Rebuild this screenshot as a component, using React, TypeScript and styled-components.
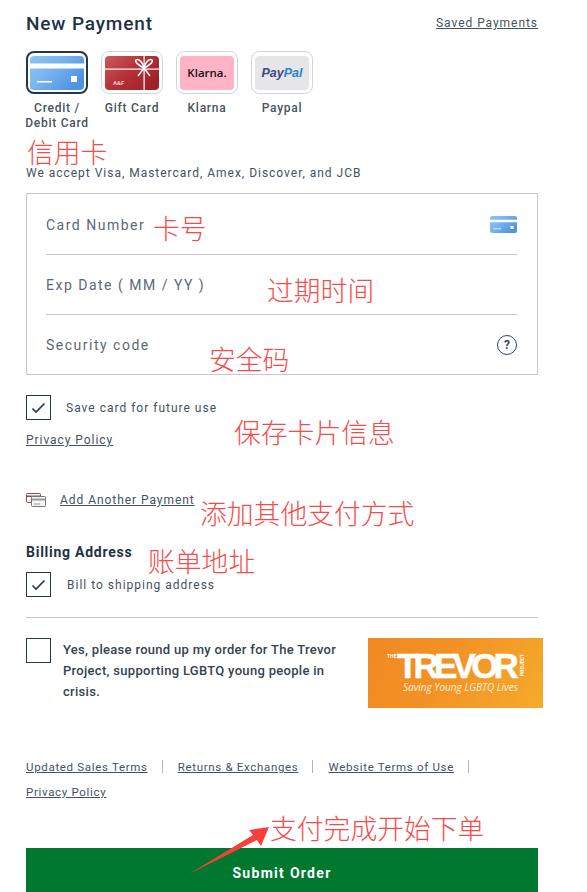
import React from "react";
import styled, { createGlobalStyle } from "styled-components";

const GlobalStyle = createGlobalStyle`
  html, body {
    margin: 0;
    padding: 0;
    background: #fff;
    overflow: hidden;
  }
  body {
    font-family: Roboto, "Liberation Sans", sans-serif;
    color: #2a3a4a;
  }
`;

const tiles = [
  { key: "card", label: "Credit / Debit Card", selected: true },
  { key: "gift", label: "Gift Card", selected: false },
  { key: "klarna", label: "Klarna", selected: false },
  { key: "paypal", label: "Paypal", selected: false },
];

const notes = [
  { text: "信用卡", x: 27, y: 138 },
  { text: "卡号", x: 153, y: 214 },
  { text: "过期时间", x: 267, y: 276 },
  { text: "安全码", x: 209, y: 345 },
  { text: "保存卡片信息", x: 234, y: 418 },
  { text: "添加其他支付方式", x: 200, y: 499 },
  { text: "账单地址", x: 148, y: 547 },
  { text: "支付完成开始下单", x: 270, y: 814 },
];

const CardArt = ({ small }: { small?: boolean }) => (
  <svg width={small ? 27 : 54} height={small ? 17 : 34} viewBox="0 0 54 34">
    <defs>
      <linearGradient id={small ? "cardS" : "cardL"} x1="0" y1="0" x2="1" y2="0.6">
        <stop offset="0" stopColor="#8fc4f2" />
        <stop offset="0.45" stopColor="#7ab5ee" />
        <stop offset="1" stopColor="#4f94e2" />
      </linearGradient>
    </defs>
    <rect width="54" height="34" rx="4" fill={`url(#${small ? "cardS" : "cardL"})`} />
    <rect y="7.5" width="54" height="5" fill="#fff" />
    <rect x="7" y="25" width="15" height="1.5" fill="#fff" />
    <rect x="41" y="20" width="6" height="6" fill="#fff" />
  </svg>
);

const GiftArt = () => (
  <svg width="54" height="34" viewBox="0 0 54 34">
    <defs>
      <linearGradient id="gift" x1="0" y1="0" x2="1" y2="0.7">
        <stop offset="0" stopColor="#cc5a5e" />
        <stop offset="0.5" stopColor="#b53238" />
        <stop offset="1" stopColor="#9c2228" />
      </linearGradient>
    </defs>
    <rect width="54" height="34" rx="4" fill="url(#gift)" />
    <rect y="12.5" width="54" height="1.2" fill="#fff" />
    <rect x="38.5" width="1.2" height="34" fill="#fff" />
    <path
      d="M39 12 C34 10 29 5 31 4 C34 2 38 7 39 12 C40 7 44 2 47 4 C49 5 44 10 39 12 L33 20 M39 12 L45 20"
      fill="none"
      stroke="#fff"
      strokeWidth="1.5"
    />
    <text x="8" y="29" fontSize="6" fontWeight="700" fill="#eec9ca" fontFamily="Roboto, sans-serif">
      A&amp;F
    </text>
  </svg>
);

const CardsIcon = () => (
  <svg width="20" height="14" viewBox="0 0 20 14">
    <rect x="0.5" y="0.5" width="14" height="9" rx="1" fill="#fff" stroke="#8a4a4a" />
    <rect x="0.5" y="2.5" width="14" height="1.5" fill="#8a4a4a" />
    <rect x="5.5" y="3.5" width="14" height="10" rx="1" fill="#f4f4f4" stroke="#777" />
    <rect x="6" y="5.5" width="13" height="2" fill="#999" />
    <rect x="8" y="10.5" width="6" height="1" fill="#999" />
  </svg>
);

const CheckMark = () => (
  <svg width="15" height="12" viewBox="0 0 15 12">
    <path d="M1.5 6.5 L5 10 L13.5 1.5" fill="none" stroke="#24384c" strokeWidth="1.6" />
  </svg>
);

const Arrow = () => (
  <ArrowSvg width="82" height="50" viewBox="0 0 82 50">
    <path d="M0 48 L64 9 L60 4 L80 1 L72 20 L68 14 Z" fill="#f93e3e" />
  </ArrowSvg>
);

const App = () => {
  return (
    <>
      <GlobalStyle />
      <Page>
        <TitleRow>
          <Title>New Payment</Title>
          <SavedLink>Saved Payments</SavedLink>
        </TitleRow>

        <TileRow>
          {tiles.map((tile) => (
            <TileColumn key={tile.key}>
              <Tile selected={tile.selected}>
                {tile.key === "card" && <CardArt />}
                {tile.key === "gift" && <GiftArt />}
                {tile.key === "klarna" && (
                  <BrandFace tone="#ffb3c7">
                    <KlarnaText>Klarna.</KlarnaText>
                  </BrandFace>
                )}
                {tile.key === "paypal" && (
                  <BrandFace tone="#e6e6e8">
                    <PayText>
                      Pay<PalText>Pal</PalText>
                    </PayText>
                  </BrandFace>
                )}
              </Tile>
              <TileLabel>{tile.label}</TileLabel>
            </TileColumn>
          ))}
        </TileRow>

        <AcceptLine>We accept Visa, Mastercard, Amex, Discover, and JCB</AcceptLine>

        <FieldBox>
          <Field>
            <FieldLabel>Card Number</FieldLabel>
            <CardArt small />
          </Field>
          <Field>
            <FieldLabel>Exp Date ( MM / YY )</FieldLabel>
          </Field>
          <Field last>
            <FieldLabel>Security code</FieldLabel>
            <HelpIcon>?</HelpIcon>
          </Field>
        </FieldBox>

        <CheckRow top={20} gap={15}>
          <CheckBox>
            <CheckMark />
          </CheckBox>
          <CheckText>Save card for future use</CheckText>
        </CheckRow>
        <PrivacyRow>
          <PlainLink>Privacy Policy</PlainLink>
        </PrivacyRow>

        <AddRow>
          <CardsIcon />
          <PlainLink>Add Another Payment</PlainLink>
        </AddRow>

        <SectionTitle>Billing Address</SectionTitle>
        <CheckRow top={11} gap={16}>
          <CheckBox>
            <CheckMark />
          </CheckBox>
          <CheckText>Bill to shipping address</CheckText>
        </CheckRow>

        <Divider />

        <DonateRow>
          <CheckBox />
          <DonateText>
            Yes, please round up my order for The Trevor Project, supporting LGBTQ young people in
            crisis.
          </DonateText>
          <TrevorBanner>
            <TrevorThe>THE</TrevorThe>
            <TrevorName>TREVOR</TrevorName>
            <TrevorProject>PROJECT</TrevorProject>
            <TrevorTag>Saving Young LGBTQ Lives</TrevorTag>
          </TrevorBanner>
        </DonateRow>

        <FooterLinks>
          <FooterLink>Updated Sales Terms</FooterLink>
          <FooterLink>Returns &amp; Exchanges</FooterLink>
          <FooterLink>Website Terms of Use</FooterLink>
          <FooterLink last>Privacy Policy</FooterLink>
        </FooterLinks>

        <SubmitButton>Submit Order</SubmitButton>

        {notes.map((note) => (
          <Note key={note.text} x={note.x} y={note.y}>
            {note.text}
          </Note>
        ))}
        <Arrow />
      </Page>
    </>
  );
};

export default App;

const Page = styled.div`
  position: relative;
  width: 587px;
  height: 892px;
  box-sizing: border-box;
  padding: 13px 49px 0 26px;
  overflow: hidden;
`;

const TitleRow = styled.div`
  display: flex;
  justify-content: space-between;
  align-items: flex-start;
  height: 38px;
`;

const Title = styled.div`
  font-size: 19px;
  line-height: 21px;
  font-weight: 500;
  letter-spacing: 0.85px;
  color: #1f3245;
`;

const PlainLink = styled.span`
  font-size: 12px;
  line-height: 18px;
  letter-spacing: 0.95px;
  color: #44525f;
  text-decoration: underline;
`;

const SavedLink = styled(PlainLink)`
  margin-top: 1px;
`;

const TileRow = styled.div`
  display: flex;
  gap: 13px;
`;

const TileColumn = styled.div`
  width: 62px;
  display: flex;
  flex-direction: column;
  align-items: center;
`;

const Tile = styled.div<{ selected: boolean }>`
  width: 62px;
  height: 43px;
  box-sizing: border-box;
  border-radius: 8px;
  border: ${(p) => (p.selected ? "2px solid #24384c" : "1px solid #d4d4d4")};
  display: flex;
  align-items: center;
  justify-content: center;
`;

const BrandFace = styled.div<{ tone: string }>`
  width: 54px;
  height: 34px;
  border-radius: 4px;
  background: ${(p) => p.tone};
  display: flex;
  align-items: center;
  justify-content: center;
`;

const KlarnaText = styled.span`
  font-family: "Open Sans", sans-serif;
  font-size: 11.5px;
  font-weight: 600;
  color: #17120f;
`;

const PayText = styled.span`
  font-family: "Liberation Sans", sans-serif;
  font-size: 12.5px;
  font-style: italic;
  font-weight: 700;
  color: #3c4a80;
`;

const PalText = styled.span`
  color: #2a84c0;
`;

const TileLabel = styled.div`
  margin-top: 7px;
  width: 75px;
  font-size: 12px;
  line-height: 15px;
  letter-spacing: 0.75px;
  font-weight: 500;
  text-align: center;
  color: #46535f;
`;

const AcceptLine = styled.div`
  margin-top: 35px;
  height: 14px;
  font-size: 12px;
  line-height: 14px;
  letter-spacing: 0.98px;
  color: #44525f;
  white-space: nowrap;
`;

const FieldBox = styled.div`
  margin-top: 13px;
  width: 512px;
  height: 182px;
  box-sizing: border-box;
  border: 1px solid #c8c8c8;
  padding: 1px 20px 0 19px;
`;

const Field = styled.div<{ last?: boolean }>`
  height: 60px;
  box-sizing: border-box;
  display: flex;
  align-items: center;
  justify-content: space-between;
  border-bottom: ${(p) => (p.last ? "none" : "1px solid #c8c8c8")};
`;

const FieldLabel = styled.span`
  font-size: 14px;
  letter-spacing: 1.5px;
  color: #5d6873;
`;

const HelpIcon = styled.span`
  width: 20px;
  height: 20px;
  box-sizing: border-box;
  border: 1.5px solid #33475a;
  border-radius: 50%;
  display: flex;
  align-items: center;
  justify-content: center;
  font-size: 12px;
  font-weight: 700;
  color: #33475a;
`;

const CheckRow = styled.div<{ top: number; gap: number }>`
  margin-top: ${(p) => p.top}px;
  display: flex;
  align-items: center;
  gap: ${(p) => p.gap}px;
`;

const CheckBox = styled.div`
  width: 25px;
  height: 25px;
  flex: none;
  box-sizing: border-box;
  border: 1px solid #24384c;
  display: flex;
  align-items: center;
  justify-content: center;
`;

const CheckText = styled.span`
  font-size: 12px;
  letter-spacing: 1px;
  color: #44525f;
`;

const PrivacyRow = styled.div`
  margin-top: 9px;
  height: 18px;
`;

const AddRow = styled.div`
  margin-top: 44px;
  height: 18px;
  display: flex;
  align-items: center;
  gap: 14px;
`;

const SectionTitle = styled.div`
  margin-top: 35px;
  font-size: 14px;
  line-height: 17px;
  font-weight: 700;
  letter-spacing: 0.75px;
  color: #1f3245;
`;

const Divider = styled.div`
  margin-top: 20px;
  width: 512px;
  height: 1px;
  background: #c8c8c8;
`;

const DonateRow = styled.div`
  margin-top: 20px;
  width: 517px;
  display: flex;
  align-items: flex-start;
`;

const DonateText = styled.div`
  margin: 0 27px 0 12px;
  padding-top: 1px;
  width: 278px;
  flex: none;
  font-size: 13px;
  line-height: 21px;
  font-weight: 500;
  letter-spacing: 0.3px;
  color: #35424f;
`;

const TrevorBanner = styled.div`
  position: relative;
  width: 175px;
  height: 70px;
  flex: none;
  background: linear-gradient(120deg, #ef8a22 0%, #f29025 40%, #f5ab2c 100%);
  color: #fff;
  overflow: hidden;
`;

const TrevorThe = styled.span`
  position: absolute;
  left: 19px;
  top: 15px;
  font-size: 5px;
  font-weight: 700;
`;

const TrevorName = styled.span`
  position: absolute;
  left: 29px;
  top: 14px;
  font-family: "Liberation Sans", sans-serif;
  font-size: 35px;
  line-height: 28px;
  font-weight: 700;
  letter-spacing: -4.8px;
  -webkit-text-stroke: 0.5px #fff;
`;

const TrevorProject = styled.span`
  position: absolute;
  left: 143px;
  top: 24px;
  font-size: 5px;
  font-weight: 700;
  transform: rotate(-90deg);
  transform-origin: center;
`;

const TrevorTag = styled.span`
  position: absolute;
  left: 35px;
  top: 42px;
  font-family: "Open Sans", sans-serif;
  font-size: 10px;
  line-height: 14px;
  font-style: italic;
  color: #fdf0d8;
  white-space: nowrap;
`;

const FooterLinks = styled.div`
  margin-top: 50px;
  width: 512px;
  display: flex;
  flex-wrap: wrap;
  row-gap: 7px;
`;

const FooterLink = styled.span<{ last?: boolean }>`
  font-size: 11.5px;
  line-height: 18px;
  letter-spacing: 0.68px;
  color: #44525f;
  text-decoration: underline;
  padding-right: 15px;
  margin-right: 15px;
  position: relative;

  &::after {
    content: "";
    display: ${(p) => (p.last ? "none" : "block")};
    position: absolute;
    right: 0;
    top: 2px;
    width: 1px;
    height: 13px;
    background: #b5b5b5;
  }
`;

const SubmitButton = styled.button`
  display: block;
  margin-top: 47px;
  width: 512px;
  height: 50px;
  border: none;
  background: #00782f;
  color: #fff;
  font-family: Roboto, sans-serif;
  font-size: 14px;
  font-weight: 700;
  letter-spacing: 1.3px;
`;

const Note = styled.span<{ x: number; y: number }>`
  position: absolute;
  left: ${(p) => p.x}px;
  top: ${(p) => p.y}px;
  font-family: "Noto Sans CJK SC", sans-serif;
  font-size: 26.8px;
  line-height: 28px;
  font-weight: 300;
  color: #f94a4a;
  white-space: nowrap;
`;

const ArrowSvg = styled.svg`
  position: absolute;
  left: 189px;
  top: 826px;
`;
